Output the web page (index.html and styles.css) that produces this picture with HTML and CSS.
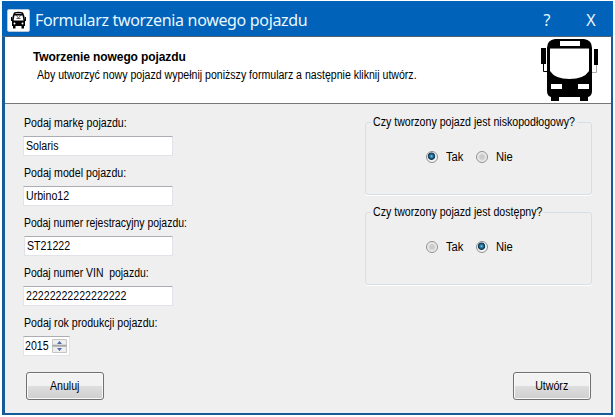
FILE: index.html
```html
<!DOCTYPE html>
<html lang="pl">
<head>
<meta charset="utf-8">
<title>Formularz tworzenia nowego pojazdu</title>
<link rel="stylesheet" href="styles.css">
</head>
<body>
<div class="window">
  <header class="titlebar">
    <svg class="app-icon" width="23" height="23" viewBox="0 0 23 23">
      <rect x=".5" y=".5" width="22" height="22" rx="1.5" fill="#fff" stroke="#b9c9db"/>
      <path d="M7 3.500Q11.500 2 16 3.500Q17.500 6 18 11V17H17V19.500H14.500V17H8.500V19.500H6V17H5V11Q5.500 6 7 3.500Z" fill="#000"/>
      <path d="M7.500 6.500H15.500L16.500 11.500H6.500Z" fill="#fff"/>
      <path d="M9 6L11.500 9L14 6M9.500 9.500H13.500" fill="none" stroke="#333" stroke-width=".8"/>
      <path d="M8.500 4.500H14.500" stroke="#ccc" stroke-width=".8"/>
      <path d="M4.500 8V12M18.500 8V12" stroke="#000"/>
      <circle cx="7.500" cy="14.500" r="1" fill="#fff"/><circle cx="15.500" cy="14.500" r="1" fill="#fff"/>
    </svg>
    <h1 class="title">Formularz tworzenia nowego pojazdu</h1>
    <span class="control help">?</span>
    <span class="control close">X</span>
  </header>
  <section class="banner">
    <div class="intro">
      <h2 class="heading">Tworzenie nowego pojazdu</h2>
      <p class="description text">Aby utworzyć nowy pojazd wypełnij poniższy formularz a następnie kliknij utwórz.</p>
    </div>
    <svg class="bus" width="58" height="64" viewBox="0 0 58 64">
      <path d="M14 1H43Q51 2 51 10V53Q51 58 47 59V63H39V59H18V63H10V59Q6 58 6 53V10Q6 2 14 1Z" fill="#000"/>
      <rect x="19" y="3" width="20" height="5" fill="#fff"/>
      <path d="M9 10.500H48V33Q43 41 28.500 41Q14 41 9 33Z" fill="#fff"/>
      <path d="M9 10.500H48" stroke="#777"/>
      <rect x="10" y="46" width="11" height="5" fill="#fff"/><rect x="37" y="46" width="11" height="5" fill="#fff"/>
      <rect x="0" y="10" width="5" height="16" fill="#000"/><rect x="53" y="11" width="4" height="16" fill="#000"/>
      <path d="M2.500 26V33.500H6" fill="none" stroke="#000"/>
      <path d="M55.500 27V34.500H51" fill="none" stroke="#aaa"/>
    </svg>
  </section>
  <main class="content">
    <div class="fields">
      <label class="field"><span class="text">Podaj markę pojazdu:</span><span class="input"><span class="text">Solaris</span></span></label>
      <label class="field"><span class="text">Podaj model pojazdu:</span><span class="input"><span class="text">Urbino12</span></span></label>
      <label class="field"><span class="text narrow">Podaj numer rejestracyjny pojazdu:</span><span class="input offset"><span class="text">ST21222</span></span></label>
      <label class="field"><span class="text narrow">Podaj numer VIN&nbsp; pojazdu:</span><span class="input"><span class="text">22222222222222222</span></span></label>
      <label class="field"><span class="text">Podaj rok produkcji pojazdu:</span>
        <span class="input spinner"><span class="text year">2015</span>
          <svg width="15" height="14" viewBox="0 0 15 14"><path d="M.5 .5H14.500V6H.5ZM.5 7.500H14.500V13.500H.5Z" fill="#eee" stroke="#c5c5c5"/><path d="M0 6.700H15" stroke="#a8a8a8" stroke-width="1.400"/><path d="M5 5L7.500 2L10 5ZM5 9L7.500 12L10 9Z" fill="#5268a8"/></svg>
        </span>
      </label>
    </div>
    <div class="choices">
      <fieldset class="group"><legend><span class="text">Czy tworzony pojazd jest niskopodłogowy?</span></legend>
        <div class="options"><span class="radio on"></span><span class="text">Tak</span><span class="radio"></span><span class="text">Nie</span></div>
      </fieldset>
      <fieldset class="group"><legend><span class="text">Czy tworzony pojazd jest dostępny?</span></legend>
        <div class="options"><span class="radio"></span><span class="text">Tak</span><span class="radio on"></span><span class="text">Nie</span></div>
      </fieldset>
    </div>
  </main>
  <footer class="actions">
    <button class="button"><span class="text">Anuluj</span></button>
    <button class="button"><span class="text">Utwórz</span></button>
  </footer>
</div>
</body>
</html>
```
FILE: styles.css
```css
* { box-sizing: border-box; }
body { margin: 0; height: 417px; padding: 1px 2px 2px; background: #fff; overflow: hidden; color: #000; font: 12px/14px "Liberation Sans", Arial, sans-serif; }
h1, h2, p { margin: 0; }
.window { width: 611px; height: 414px; background: #efefef; border: solid #155b9c; border-width: 0 2px 2px 3px; display: flex; flex-direction: column; }
.titlebar { height: 36px; margin: 0 -2px 0 -3px; padding: 4px 0 0 5px; background: #0062b9; border-bottom: 1px solid #4b6278; display: flex; align-items: center; color: #eaf7ff; font: 16px/22px "Noto Sans", "Open Sans", sans-serif; }
.app-icon { flex: none; }
.title { margin: -1px 0 0 5px; width: 490px; font-size: 16px; font-weight: 400; letter-spacing: -.33px; white-space: nowrap; }
.control { width: 44px; margin-top: -1px; text-align: center; }
.banner { height: 67px; background: #fff; border-bottom: 1px solid #777; display: flex; justify-content: space-between; }
.intro { padding: 12px 0 0 28px; }
.heading { font-size: 12px; line-height: 16px; letter-spacing: -.1px; }
.description { margin: 3px 0 0 4px; }
.bus { margin: 1px 12px 0 0; flex: none; }
.text { display: inline-block; white-space: nowrap; transform: scaleX(.885); transform-origin: left; }
.description.text { transform: scaleX(.881); }
.narrow { transform: scaleX(.869); }
.content { display: flex; justify-content: space-between; padding: 11px 18px 0 18px; height: 268px; }
.fields { width: 190px; }
.field { display: block; height: 50px; }
.field > .text { display: block; margin-left: 1px; line-height: 16px; }
.input { display: flex; align-items: center; width: 150px; height: 20px; margin-top: 5px; padding: 0 2px; background: #fff; border: 1px solid #e2e3e9; border-top-color: #abadb3; }
.offset { margin-left: 1px; width: 149px; }
.spinner { width: 47px; padding: 0 2px 0 1px; justify-content: space-between; }
.spinner svg { flex: none; }
.year { width: 26px; }
.choices { width: 227px; margin-right: 1px; display: flex; flex-direction: column; gap: 10px; }
.group { margin: 0; padding: 0 0 0 5px; border: 1px solid #d5dfe5; border-radius: 3px; height: 80px; width: 227px; box-shadow: 0 1px #fff; min-width: 0; }
legend { height: 14px; padding: 0 0 0 2px; width: 206px; }
.group:last-child legend { width: 172px; }
.options { display: flex; align-items: center; margin: 20px 0 0 55px; height: 16px; }
.options .text { width: 30px; margin-left: 8px; transform: scaleX(.93); }
.radio { width: 12px; height: 12px; border: 1px solid #8e8f8f; border-radius: 50%; background: radial-gradient(circle, #ccc 0 2px, #f4f4f4 5px); }
.on { background: radial-gradient(circle at 45% 42%, #8ed0ef 0, #247aa5 1.500px, #11344e 3.300px, #f4f4f4 4.100px); }
.actions { display: flex; justify-content: space-between; padding: 0 20px 0 21px; }
.button { width: 78px; height: 28px; padding: 0; border: 1px solid #707070; border-radius: 3px; box-shadow: inset 0 0 0 1px #f9f9f9; background: linear-gradient(#f2f2f2 0 48%, #dedede 50%, #cfcfcf); font: inherit; color: #000; }
.button .text { transform-origin: center; }
```
